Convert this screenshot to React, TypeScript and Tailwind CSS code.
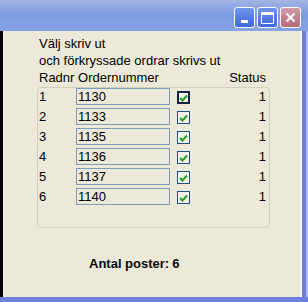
const rows = [
  { nr: "1", order: "1130", focus: true },
  { nr: "2", order: "1133" },
  { nr: "3", order: "1135" },
  { nr: "4", order: "1136" },
  { nr: "5", order: "1137" },
  { nr: "6", order: "1140" },
];

const Check = ({ focus }: { focus?: boolean }) => (
  <div
    className={`w-[13px] h-[13px] flex items-center justify-center bg-[#f4f3ee] ${
      focus ? "border-2 border-[#10243f]" : "border border-[#1c5180]"
    }`}
  >
    <svg width="9" height="8" viewBox="0 0 9 8">
      <path d="M1 4 L3.5 6.5 L8 1.5" stroke="#21a121" strokeWidth="2" fill="none" />
    </svg>
  </div>
);

export default function App() {
  return (
    <div
      className="w-[308px] h-[302px] flex flex-col bg-[#ECE9D8] text-[13px] text-black"
      style={{ fontFamily: '"Liberation Sans", Arial, sans-serif' }}
    >
      {/* title bar */}
      <div className="h-[31px] flex items-start justify-end gap-[2px] pr-[7px] pt-[7px] bg-gradient-to-b from-[#a3b4e2] via-[#7d9be2] to-[#86a3e8]">
        <div className="w-[21px] h-[21px] rounded-[3px] border border-white bg-gradient-to-b from-[#6f95ee] to-[#3f68d8] flex items-end justify-center pb-[4px]">
          <div className="w-[7px] h-[3px] bg-white" />
        </div>
        <div className="w-[21px] h-[21px] rounded-[3px] border border-white bg-gradient-to-b from-[#6f95ee] to-[#3f68d8] flex items-center justify-center">
          <div className="w-[13px] h-[12px] border border-white border-t-[3px]" />
        </div>
        <div className="w-[21px] h-[21px] rounded-[3px] border border-white bg-gradient-to-b from-[#d49aa6] to-[#b26c7b] flex items-center justify-center">
          <svg width="11" height="11" viewBox="0 0 11 11">
            <path d="M1.5 1.5 L9.5 9.5 M9.5 1.5 L1.5 9.5" stroke="white" strokeWidth="2" />
          </svg>
        </div>
      </div>

      <div className="flex-1 flex">
        <div className="w-[3px] bg-black" />
        <div className="flex-1 flex flex-col pl-[34px] pt-[4px]">
          <div className="leading-[17px] pl-[2px]">Välj skriv ut</div>
          <div className="leading-[17px] pl-[2px]">och förkryssade ordrar skrivs ut</div>
          <div className="leading-[17px] pl-[2px] pr-[4px] w-[233px] flex justify-between">
            <span>Radnr Ordernummer</span>
            <span>Status</span>
          </div>
          <div className="mt-[1px] w-[233px] h-[141px] border border-[#d2cfbc] rounded-[4px] flex flex-col gap-[3px] pl-[1px] pr-[3px]">
            {rows.map((r) => (
              <div key={r.nr} className="h-[17px] flex items-center">
                <span className="w-[37px]">{r.nr}</span>
                <div className="w-[94px] h-[17px] border border-[#7f9db9] pl-[1px] leading-[16px]">
                  {r.order}
                </div>
                <div className="ml-[7px] mt-[2px]">
                  <Check focus={r.focus} />
                </div>
                <span className="flex-1 text-right">1</span>
              </div>
            ))}
          </div>
          <div className="mt-[26px] ml-[52px] flex gap-[3px] font-bold text-[13px] text-[#0a0a14]">
            <span>Antal poster:</span>
            <span>6</span>
          </div>
        </div>
        <div className="w-[2px] bg-[#f8f7f2]" />
        <div className="w-[4px] bg-[#6f7fe0]" />
        <div className="w-[2px] bg-[#aab6ee]" />
      </div>
      <div className="h-[5px] bg-[#6f7fe0]" />
    </div>
  );
}
